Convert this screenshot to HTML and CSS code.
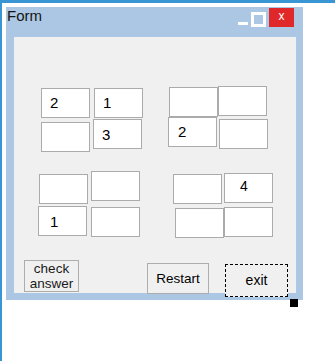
FILE: index.html
```html
<!DOCTYPE html>
<html>
<head>
<meta charset="utf-8">
<link rel="stylesheet" href="styles.css">
</head>
<body>
<div class="screen">
  <div class="form">
    <div class="titlebar">
      <span class="title">Form</span>
      <div class="caption-buttons">
        <span class="cap-min"></span>
        <span class="cap-max"></span>
        <span class="cap-close">x</span>
      </div>
    </div>
    <div class="client">
      <div class="group-row row-top">
        <div class="group g1">
          <div class="tb-row">
            <div class="tb tb-a">2</div>
            <div class="tb tb-b">1</div>
          </div>
          <div class="tb-row">
            <div class="tb tb-c"></div>
            <div class="tb tb-d">3</div>
          </div>
        </div>
        <div class="group g2">
          <div class="tb-row">
            <div class="tb tb-e"></div>
            <div class="tb tb-f"></div>
          </div>
          <div class="tb-row">
            <div class="tb tb-g">2</div>
            <div class="tb tb-h"></div>
          </div>
        </div>
      </div>
      <div class="group-row row-bottom">
        <div class="group g3">
          <div class="tb-row">
            <div class="tb tb-i"></div>
            <div class="tb tb-j"></div>
          </div>
          <div class="tb-row">
            <div class="tb tb-k">1</div>
            <div class="tb tb-l"></div>
          </div>
        </div>
        <div class="group g4">
          <div class="tb-row">
            <div class="tb tb-m"></div>
            <div class="tb tb-n">4</div>
          </div>
          <div class="tb-row">
            <div class="tb tb-o"></div>
            <div class="tb tb-p"></div>
          </div>
        </div>
      </div>
      <div class="button-row">
        <div class="btn btn-check">check<br>answer</div>
        <div class="btn btn-restart">Restart</div>
        <div class="btn btn-exit">exit</div>
      </div>
    </div>
    <span class="grip"></span>
  </div>
</div>
</body>
</html>
```

FILE: styles.css
```css
html, body {
  margin: 0;
  padding: 0;
  background: #ffffff;
}

.screen {
  width: 335px;
  height: 361px;
  box-sizing: border-box;
  border-top: 3px solid #3a95d5;
  border-left: 2px solid #3a95d5;
  padding: 4px 0 0 4px;
  font-family: "Liberation Sans", Arial, sans-serif;
  color: #000;
}

.form {
  position: relative;
  width: 297px;
  height: 293px;
  background: #abc7e3;
}

.titlebar {
  display: flex;
  align-items: flex-start;
  height: 30px;
}

.title {
  margin-left: 1px;
  font-size: 15px;
  line-height: 18px;
  color: #141414;
}

.caption-buttons {
  margin-left: auto;
  margin-right: 9px;
  display: flex;
  align-items: flex-start;
}

.cap-min {
  width: 10px;
  height: 3px;
  margin-top: 15px;
  background: #ffffff;
}

.cap-max {
  width: 15px;
  height: 15px;
  margin-top: 5px;
  margin-left: 3px;
  box-sizing: border-box;
  border: 3px solid #ffffff;
}

.cap-close {
  width: 25px;
  height: 19px;
  margin-top: 1px;
  margin-left: 3px;
  background: #e0282b;
  color: #ffffff;
  font-size: 12px;
  line-height: 17px;
  text-align: center;
}

.client {
  margin-left: 8px;
  width: 282px;
  height: 256px;
  background: #f0f0f0;
  display: flex;
  flex-direction: column;
}

.group-row {
  display: flex;
  align-items: flex-start;
}

.row-top {
  margin-top: 49px;
}

.row-bottom {
  margin-top: 19px;
}

.group {
  display: flex;
  flex-direction: column;
  align-items: flex-start;
}

.g1 { margin-left: 27px; margin-top: 2px; }
.g2 { margin-left: 25px; }
.g3 { margin-left: 24px; }
.g4 { margin-left: 33px; margin-top: 2px; }

.tb-row {
  display: flex;
  align-items: flex-start;
}

.tb {
  width: 49px;
  height: 30px;
  box-sizing: border-box;
  border: 1px solid #ababab;
  background: #ffffff;
  padding-left: 8px;
  font-size: 15px;
  line-height: 28px;
  color: #000;
}

/* group 1 */
.tb-b { margin-left: 4px; }
.tb-c { margin-top: 4px; }
.tb-d { margin-left: 3px; margin-top: 1px; padding-top: 1px; line-height: 27px; }

/* group 2 */
.tb-e { margin-left: 1px; margin-top: 1px; }
.tb-g { padding-left: 9px; }
.tb-h { margin-left: 2px; margin-top: 2px; }

/* group 3 */
.tb-i { margin-left: 1px; margin-top: 3px; }
.tb-j { margin-left: 3px; }
.tb-k { margin-top: 2px; padding-left: 11px; padding-top: 1px; line-height: 27px; }
.tb-l { margin-left: 4px; margin-top: 3px; }

/* group 4 */
.tb-m { margin-top: 1px; }
.tb-n { margin-left: 2px; padding-left: 15px; font-size: 14px; line-height: 24px; }
.tb-o { margin-left: 2px; margin-top: 4px; }
.tb-p { margin-top: 3px; }

.button-row {
  display: flex;
  align-items: flex-start;
  margin-top: 22px;
}

.btn {
  box-sizing: border-box;
  border: 1px solid #adadad;
  background: #f0f0f0;
  text-align: center;
  color: #000;
  font-size: 13.5px;
}

.btn-check {
  margin-left: 10px;
  width: 55px;
  height: 32px;
  line-height: 15px;
  color: #1a1a1a;
}

.btn-restart {
  margin-left: 68px;
  margin-top: 3px;
  width: 62px;
  height: 31px;
  line-height: 29px;
}

.btn-exit {
  margin-left: 16px;
  margin-top: 4px;
  width: 63px;
  height: 33px;
  line-height: 31px;
  font-size: 14px;
  border: 1px dashed #000000;
}

.grip {
  position: absolute;
  left: 284px;
  top: 292px;
  width: 8px;
  height: 8px;
  background: #000000;
}
```
